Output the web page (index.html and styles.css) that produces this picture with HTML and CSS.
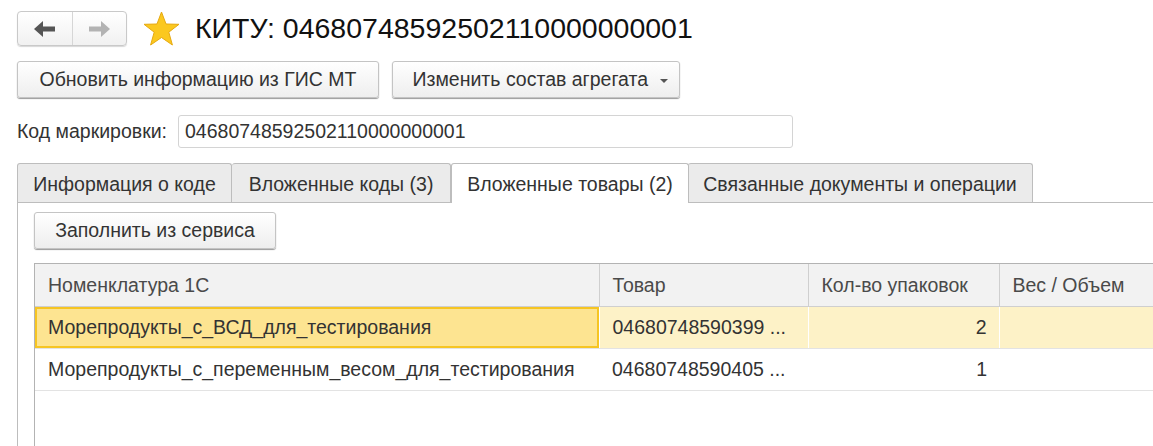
FILE: index.html
```html
<!DOCTYPE html>
<html lang="ru">
<head>
    <meta charset="UTF-8">
    <title>КИТУ: 04680748592502110000000001</title>
    <link rel="stylesheet" href="styles.css">
</head>
<body>
    <div class="page">
        <div class="header">
            <div class="nav">
                <span class="nav-btn">
                    <svg width="22" height="16" viewBox="0 0 22 16"><path d="M0 8 L9 0 L9 5.5 L21 5.5 L21 10.5 L9 10.5 L9 16 Z" fill="#555"/></svg>
                </span>
                <span class="nav-btn">
                    <svg width="22" height="16" viewBox="0 0 22 16"><path d="M22 8 L13 0 L13 5.5 L1 5.5 L1 10.5 L13 10.5 L13 16 Z" fill="#b3b3b3"/></svg>
                </span>
            </div>
            <svg class="star" width="37" height="35" viewBox="0 0 37 35"><path d="M18.5 1 L23 13 L36 13.3 L25.8 21.2 L29.4 34 L18.5 26.5 L7.6 34 L11.2 21.2 L1 13.3 L14 13 Z" fill="#fbc81f" stroke="#e6a910" stroke-width="1" stroke-linejoin="round"/></svg>
            <h1 class="title">КИТУ: 04680748592502110000000001</h1>
        </div>

        <div class="toolbar">
            <button class="btn btn-wide">Обновить информацию из ГИС МТ</button>
            <button class="btn btn-menu">Изменить состав агрегата <span class="caret"></span></button>
        </div>

        <div class="field">
            <label for="code">Код маркировки:</label>
            <input id="code" type="text" value="04680748592502110000000001">
        </div>

        <div class="tabs">
            <div class="tab tab-1">Информация о коде</div>
            <div class="tab tab-2">Вложенные коды (3)</div>
            <div class="tab tab-3 active">Вложенные товары (2)</div>
            <div class="tab tab-4">Связанные документы и операции</div>
        </div>

        <div class="panel">
            <button class="btn btn-fill">Заполнить из сервиса</button>
            <div class="grid">
                <table>
                    <colgroup>
                        <col class="c1"><col class="c2"><col class="c3"><col class="c4">
                    </colgroup>
                    <thead>
                        <tr>
                            <th>Номенклатура 1С</th>
                            <th>Товар</th>
                            <th>Кол-во упаковок</th>
                            <th>Вес / Объем</th>
                        </tr>
                    </thead>
                    <tbody>
                        <tr class="selected">
                            <td class="current">Морепродукты_с_ВСД_для_тестирования</td>
                            <td>04680748590399 ...</td>
                            <td class="num">2</td>
                            <td></td>
                        </tr>
                        <tr>
                            <td>Морепродукты_с_переменным_весом_для_тестирования</td>
                            <td>04680748590405 ...</td>
                            <td class="num">1</td>
                            <td></td>
                        </tr>
                    </tbody>
                </table>
            </div>
        </div>
    </div>
</body>
</html>
```

FILE: styles.css
```css
body {
    margin: 0;
    font-family: "Liberation Sans", Arial, sans-serif;
    font-size: 19.5px;
    color: #333;
    background: #fff;
    overflow: hidden;
}
.page {
    padding: 11px 0 0 17px;
    height: 435px;
    display: flex;
    flex-direction: column;
}
.header {
    display: flex;
    align-items: center;
    height: 35px;
}
.nav {
    display: flex;
    width: 108px;
    height: 33px;
    border: 1px solid #c9c9c9;
    border-radius: 4px;
    background: linear-gradient(#fff, #f1f1f1);
    box-shadow: 0 1px 1px #d8d8d8;
}
.nav-btn {
    flex: 1;
    display: flex;
    align-items: center;
    justify-content: center;
}
.nav-btn + .nav-btn {
    border-left: 1px solid #d6d6d6;
}
.star {
    margin-left: 16px;
}
.title {
    margin: 0 0 0 15px;
    font-weight: normal;
    font-size: 28.5px;
    color: #111;
}
.toolbar {
    display: flex;
    gap: 13px;
    margin-top: 15px;
}
.btn {
    height: 37px;
    font-family: inherit;
    font-size: 19.5px;
    color: #333;
    border: 1px solid #c4c4c4;
    border-radius: 3px;
    background: linear-gradient(#fff, #eeeeee);
    box-shadow: 0 1px 1px #9a9a9a;
    padding: 0;
}
.btn-wide {
    width: 362px;
}
.btn-menu {
    width: 288px;
    padding-left: 8px;
}
.caret {
    display: inline-block;
    margin-left: 6px;
    vertical-align: middle;
    border-left: 4px solid transparent;
    border-right: 4px solid transparent;
    border-top: 4px solid #555;
}
.field {
    display: flex;
    align-items: center;
    margin-top: 17px;
}
.field label {
    width: 161px;
}
.field input {
    width: 601px;
    height: 31px;
    border: 1px solid #d4d4d4;
    border-radius: 3px;
    padding: 0 6px;
    font-family: inherit;
    font-size: 19.5px;
    color: #333;
}
.tabs {
    display: flex;
    margin-top: 15px;
    height: 39px;
}
.tab {
    box-sizing: border-box;
    height: 40px;
    padding-top: 9px;
    text-align: center;
    background: #ebebeb;
    border: 1px solid #bdbdbd;
    border-bottom: none;
    border-radius: 3px 3px 0 0;
}
.tab + .tab {
    border-left: none;
}
.tab-1 { width: 215px; }
.tab-2 { width: 219px; }
.tab-3 { width: 238px; }
.tab-4 { width: 345px; border-right: 1px solid #bdbdbd; }
.tab.active {
    background: #fff;
    position: relative;
    z-index: 1;
    border-left: 1px solid #bdbdbd;
    border-right: 1px solid #bdbdbd;
    margin-right: -1px;
}
.panel {
    flex: 1;
    border-top: 1px solid #bdbdbd;
    border-left: 1px solid #bdbdbd;
    padding: 9px 0 0 16px;
}
.btn-fill {
    width: 242px;
}
.grid {
    margin-top: 14px;
    border-top: 1px solid #b3b3b3;
    border-left: 1px solid #b3b3b3;
    height: 200px;
}
table {
    border-collapse: collapse;
    table-layout: fixed;
    width: 1170px;
}
.c1 { width: 564px; }
.c2 { width: 209px; }
.c3 { width: 191px; }
.c4 { width: 206px; }
th {
    height: 42px;
    padding: 0 0 0 13px;
    text-align: left;
    font-weight: normal;
    color: #4a4a4a;
    background: #f2f2f2;
    border-right: 1px solid #cfcfcf;
    border-bottom: 1px solid #cfcfcf;
}
td {
    height: 41px;
    padding: 0 0 0 13px;
    white-space: nowrap;
    overflow: hidden;
    border-bottom: 1px solid #e3e3e3;
}
td.num {
    text-align: right;
    padding-right: 12px;
}
.selected td {
    background: #fdf2c7;
    border-right: 1px solid #fff;
}
.selected td.current {
    background: #fde491;
    box-shadow: inset 0 0 0 2px #f6c523;
}
```
